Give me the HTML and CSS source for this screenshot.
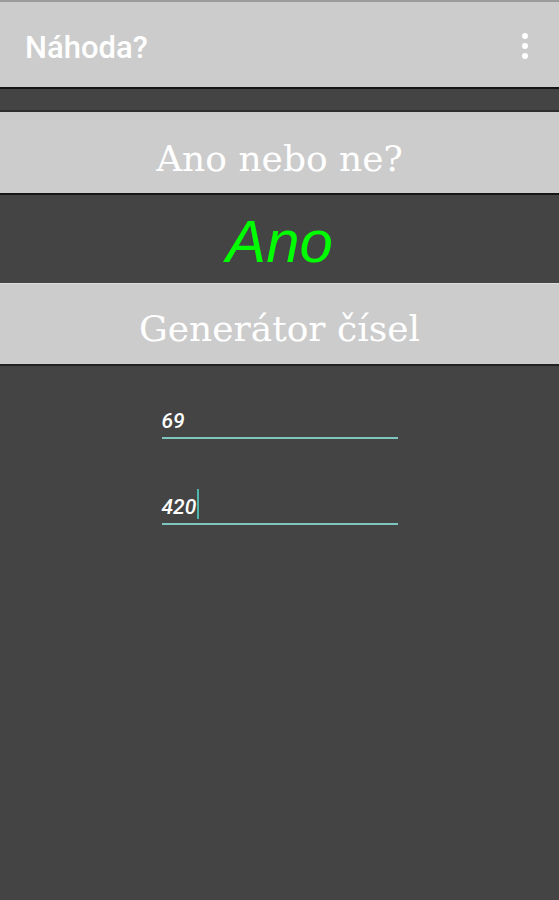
FILE: index.html
```html
<!DOCTYPE html>
<html lang="cs">
<head>
<meta charset="utf-8">
<title>Náhoda?</title>
<link rel="stylesheet" href="styles.css">
</head>
<body>
<div class="topline"></div>
<header class="appbar">
  <span class="title">Náhoda?</span>
  <span class="menu"><i></i><i></i><i></i></span>
</header>
<div class="gap"></div>
<div class="btn btn-first">Ano nebo ne?</div>
<div class="result">Ano</div>
<div class="btn btn-second">Generátor čísel</div>
<div class="fields">
  <div class="field"><span class="val">69</span></div>
  <div class="field"><span class="val">420</span><span class="cursor"></span></div>
</div>
</body>
</html>
```
FILE: styles.css
```css
html, body {
  margin: 0;
  padding: 0;
  background: #444444;
  height: 100%;
}
body {
  font-family: Roboto, "Liberation Sans", sans-serif;
}
.topline {
  height: 2px;
  background: #9c9c9c;
}
.appbar {
  height: 87px;
  background: #cccccc;
  border-bottom: 2px solid #141414;
  display: flex;
  align-items: center;
  justify-content: space-between;
  padding: 0 31px 0 25px;
  box-sizing: border-box;
}
.title {
  color: #ffffff;
  font-size: 31px;
  font-weight: 500;
  margin-top: 5px;
}
.menu {
  display: flex;
  flex-direction: column;
  gap: 4px;
  margin-top: 2px;
}
.menu i {
  display: block;
  width: 6px;
  height: 6px;
  border-radius: 50%;
  background: #ffffff;
}
.gap {
  height: 21px;
}
.btn {
  background: #cccccc;
  color: #ffffff;
  font-family: "DejaVu Serif", "Liberation Serif", serif;
  font-size: 36px;
  display: flex;
  align-items: center;
  justify-content: center;
  box-sizing: border-box;
}
.btn-first {
  height: 85px;
  border-top: 2px solid #2e2e2e;
  border-bottom: 2px solid #161616;
  padding-top: 12px;
}
.btn-second {
  height: 83px;
  border-top: 1px solid #dcdcdc;
  border-bottom: 2px solid #222222;
  padding-top: 9px;
}
.result {
  height: 88px;
  display: flex;
  align-items: center;
  justify-content: center;
  color: #00ff00;
  font-family: "Liberation Sans", Arial, sans-serif;
  font-style: italic;
  font-size: 60px;
  padding-top: 4px;
  box-sizing: border-box;
}
.fields {
  width: 236px;
  margin: 0 auto;
  padding-top: 37px;
  display: flex;
  flex-direction: column;
  gap: 50px;
}
.field {
  height: 28px;
  border-bottom: 2px solid #7fc6bf;
  display: flex;
  align-items: flex-end;
  padding-bottom: 6px;
}
.val {
  color: #ffffff;
  font-family: Roboto, "Open Sans", sans-serif;
  font-style: italic;
  font-weight: 500;
  font-size: 21px;
  line-height: 20px;
}
.cursor {
  display: block;
  width: 2px;
  height: 30px;
  background: #4db6ac;
  margin-left: 1px;
  margin-bottom: -2px;
}
```
